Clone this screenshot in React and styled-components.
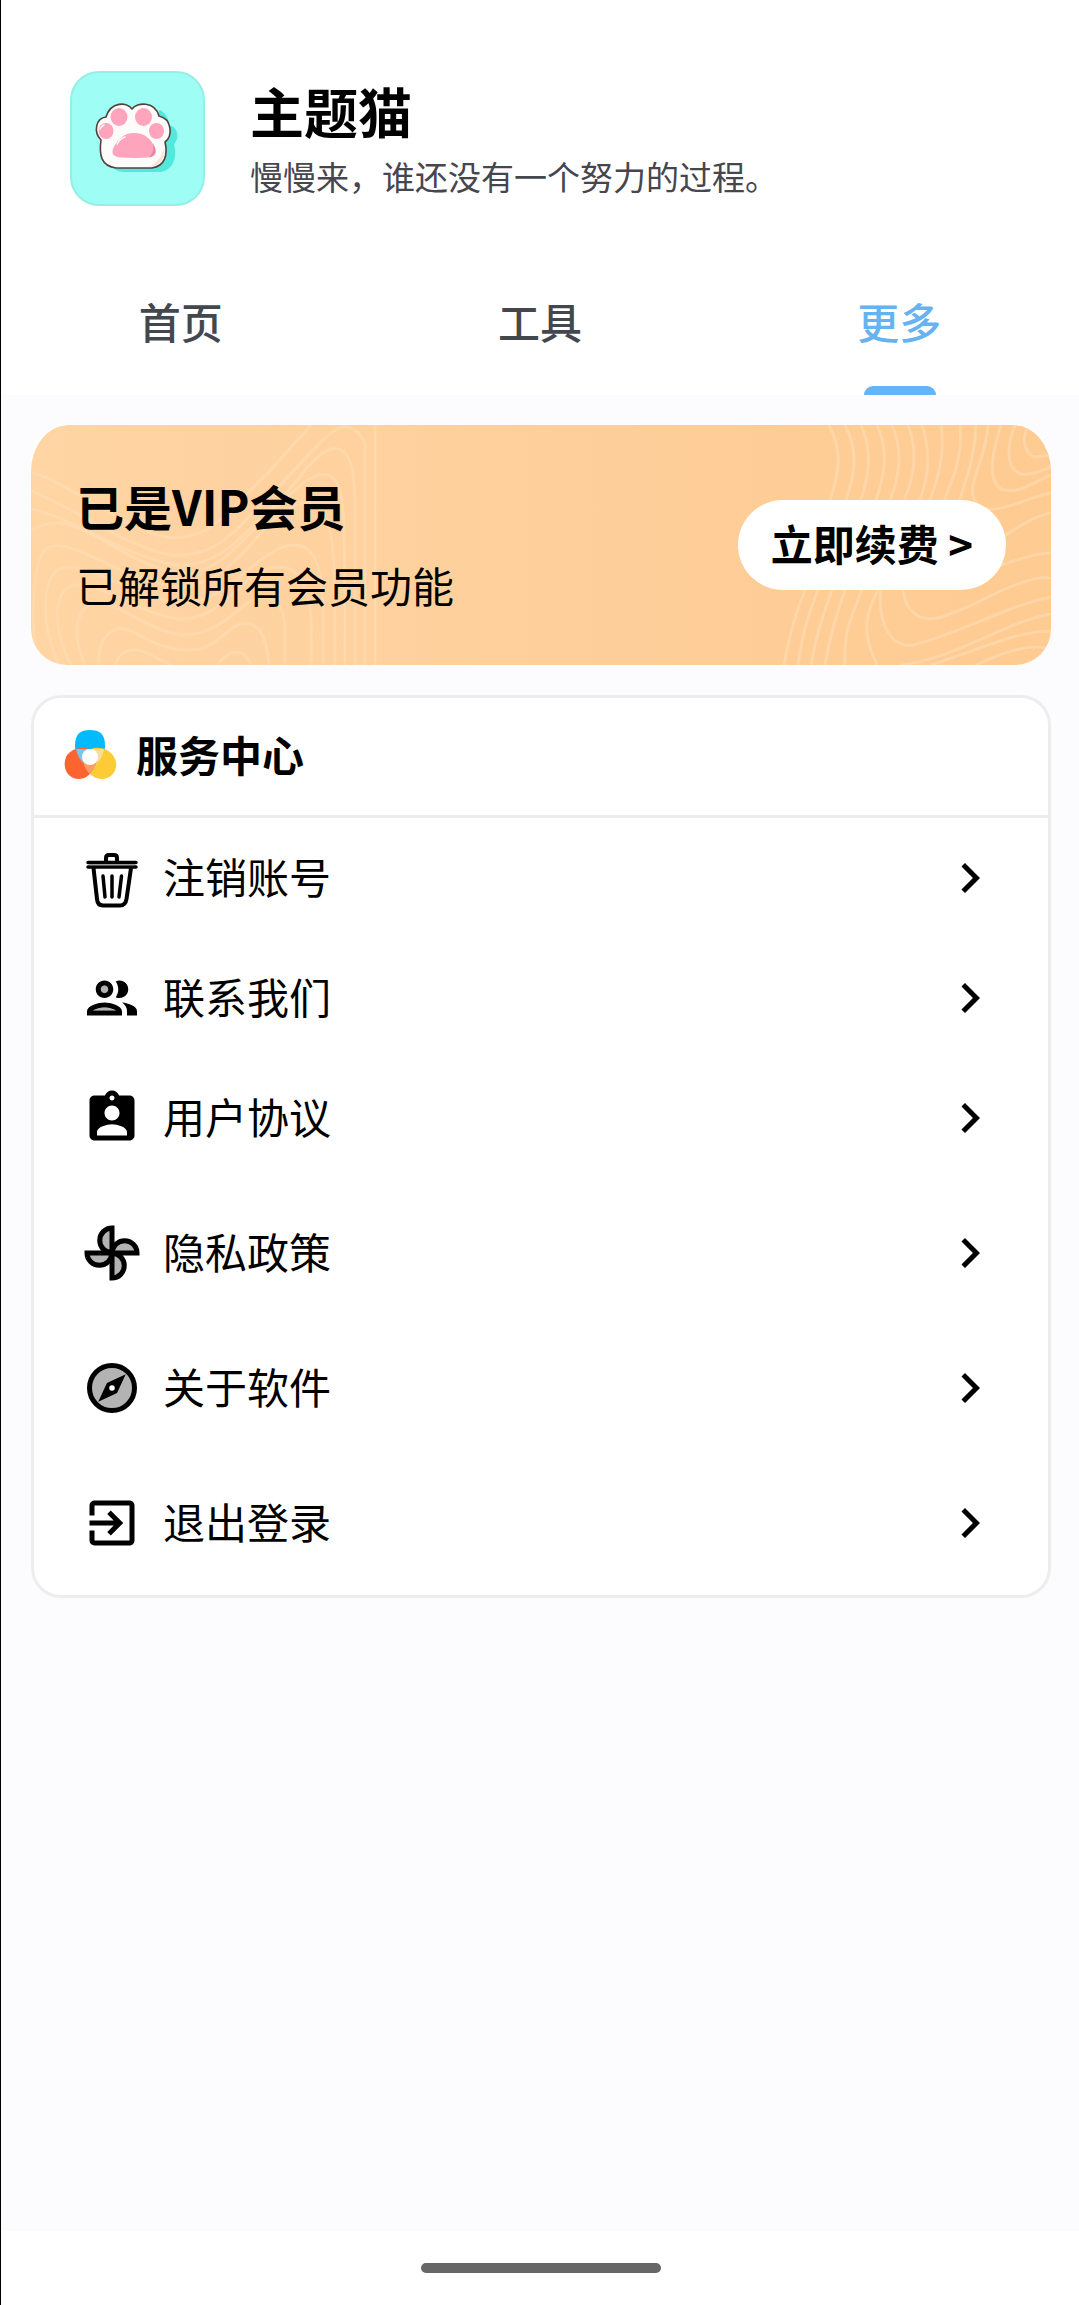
import React from "react";
import styled, { createGlobalStyle } from "styled-components";
import { MdAssignmentInd, MdChevronRight, MdExitToApp } from "react-icons/md";

const GlobalStyle = createGlobalStyle`
  *, *::before, *::after { box-sizing: border-box; }
  body {
    margin: 0;
    background: #ffffff;
    color: #000000;
    font-family: "Noto Sans CJK SC", "Noto Sans", sans-serif;
  }
  button {
    margin: 0;
    padding: 0;
    border: 0;
    background: none;
    color: inherit;
    font: inherit;
    text-align: left;
    cursor: pointer;
  }
  h1, h2, p, ul { margin: 0; padding: 0; }
  svg { display: block; flex: none; }
`;

const Page = styled.div`
  display: flex;
  flex-direction: column;
  min-height: 100vh;
  border-left: 1px solid #000000;
  background: #fcfcff;
`;

const Header = styled.header`
  background: #ffffff;
`;

const Profile = styled.div`
  display: flex;
  align-items: center;
  gap: 45px;
  padding: 71px 69px 45px;
`;

const ProfileText = styled.div`
  padding-bottom: 4px;
`;

const AppName = styled.h1`
  font-size: 54px;
  line-height: 78px;
  font-weight: 700;
`;

const Motto = styled.p`
  color: #46464f;
  font-size: 33px;
  line-height: 52px;
`;

const Tabs = styled.nav`
  display: flex;
`;

const Tab = styled.button`
  position: relative;
  flex: 1;
  height: 144px;
  padding-bottom: 6px;
  color: ${(p) => (p.$active ? "#66b3f0" : "#43474e")};
  font-size: 42px;
  font-weight: 500;
  text-align: center;

  &::after {
    content: "";
    display: ${(p) => (p.$active ? "block" : "none")};
    position: absolute;
    bottom: 0;
    left: calc(50% - 35px);
    width: 72px;
    height: 9px;
    border-radius: 9px 9px 0 0;
    background: #66b3f5;
  }
`;

const Main = styled.main`
  display: flex;
  flex: 1;
  flex-direction: column;
  gap: 30px;
  padding: 30px 28px 30px 30px;
`;

const Banner = styled.section`
  position: relative;
  display: flex;
  align-items: center;
  justify-content: space-between;
  height: 240px;
  padding: 0 45px;
  border-radius: 36px;
  background: #ffffff;
  overflow: hidden;
`;

const BannerArt = styled.svg`
  position: absolute;
  inset: 0;
  width: 100%;
  height: 100%;
`;

const BannerText = styled.div`
  position: relative;
  display: grid;
  gap: 2px;
`;

const BannerTitle = styled.h2`
  font-size: 48px;
  line-height: 78px;
  font-weight: 700;
`;

const BannerNote = styled.p`
  font-size: 42px;
  line-height: 78px;
`;

const RenewButton = styled.button`
  position: relative;
  height: 90px;
  padding: 0 33px 5px;
  border-radius: 45px;
  background: #ffffff;
  font-size: 42px;
  font-weight: 700;
`;

const Card = styled.section`
  border: 3px solid #ededee;
  border-radius: 30px;
  background: #ffffff;
`;

const CardHeader = styled.div`
  display: flex;
  align-items: center;
  gap: 16px;
  height: 120px;
  padding: 0 26px 2px;
  border-bottom: 3px solid #ededee;
`;

const CardTitle = styled.h2`
  padding-bottom: 4px;
  font-size: 42px;
  line-height: 60px;
  font-weight: 700;
`;

const Menu = styled.ul`
  padding-bottom: 12px;
  list-style: none;
`;

const MenuItem = styled.li`
  margin-top: ${(p) => (p.$spaced ? "15px" : "0")};
`;

const MenuButton = styled.button`
  display: flex;
  align-items: center;
  gap: 21px;
  width: 100%;
  height: 120px;
  padding: 0 48px;
`;

const MenuLabel = styled.span`
  flex: 1;
  padding-bottom: 4px;
  font-size: 42px;
  line-height: 60px;
`;

const SystemBar = styled.footer`
  display: flex;
  align-items: center;
  justify-content: center;
  height: 74px;
  padding-left: 2px;
  background: #ffffff;
`;

const HomeHandle = styled.div`
  width: 240px;
  height: 10px;
  border-radius: 5px;
  background: #676767;
`;

function PawLogo() {
  return (
    <svg width="135" height="135" viewBox="0 0 135 135" aria-hidden="true">
      <rect x="1" y="1" width="133" height="133" rx="28" fill="#9efdf4" stroke="#96efe5" strokeWidth="2" />
      <path
        d="M90 39C97 43 99 49 99 54C108 56 110 67 104 73C107 84 105 98 91 101H55C48 101 44 98 42 95Z"
        fill="#52e8db"
      />
      <path
        d="M62 38C57 31 41 30 36 46C26 47 23 61 31 69C29 84 31 95 46 97H82C95 95 98 84 95 71C103 65 102 48 89 45C85 30 67 31 62 38Z"
        fill="#fdfcfa"
        stroke="#54413f"
        strokeWidth="1.6"
        strokeLinejoin="round"
      />
      <path d="M94 77C95 88 90 94 80 96C87 91 92 86 94 77Z" fill="#f6e3d8" />
      <ellipse cx="49" cy="46" rx="8.5" ry="9" fill="#fea4bd" />
      <ellipse cx="73.5" cy="46" rx="8.5" ry="9" fill="#fea4bd" />
      <ellipse cx="36" cy="60" rx="7.5" ry="8" fill="#fea4bd" />
      <ellipse cx="86.5" cy="60" rx="7.5" ry="8" fill="#fea4bd" />
      <path
        d="M64 62C53 62 47 69 43 78C41 84 45 86 51 86.5C60 87 70 87 78 86.5C84 86 88 83 85 77C81 68 75 62 64 62Z"
        fill="#fea4bd"
      />
      <path d="M83 72C87 79 86 85 79 86.5C83 82 84 78 83 72Z" fill="#ea84a4" />
      <path d="M47 73C49 69 52 67 55 66M30 58C31 56 32 55 34 54" fill="none" stroke="#fff" strokeWidth="1.4" strokeLinecap="round" />
    </svg>
  );
}

function BannerPattern() {
  return (
    <BannerArt viewBox="0 0 1020 240" preserveAspectRatio="none" aria-hidden="true">
      <defs>
        <linearGradient id="gold" x1="0" x2="1" y1="0" y2="0">
          <stop offset="0" stopColor="#ffd5a4" />
          <stop offset="0.5" stopColor="#fecf9b" />
          <stop offset="1" stopColor="#fecb92" />
        </linearGradient>
        <clipPath id="plate">
          <path d="M38 0H982A38 46 0 0 1 1020 46V208A28 32 0 0 1 992 240H28A28 32 0 0 1 0 208V46A38 46 0 0 1 38 0Z" />
        </clipPath>
      </defs>
      <g clipPath="url(#plate)" fill="none" stroke="#ffdfba" strokeOpacity="0.5" strokeWidth="3">
        <rect width="1020" height="240" fill="url(#gold)" stroke="none" />
        <path d="M0 47C42 60 95 105 135 112C180 118 200 82 235 50L280 0" />
        <path d="M0 66C42 82 95 122 140 130C185 134 205 104 240 70C262 48 282 22 300 8C312 -2 328 0 334 20V240" />
        <path d="M0 84C40 92 95 132 145 140C190 142 210 110 240 84C265 62 280 30 300 24C318 20 322 40 324 70V240" />
        <path d="M0 106C22 90 45 100 75 117C105 135 135 150 160 148C195 144 225 98 250 78C272 56 292 40 305 56C314 70 314 100 314 240" />
        <path d="M6 240C0 200 0 130 18 122C45 112 95 160 150 162C200 158 222 110 248 90C268 74 285 74 294 92C304 110 304 150 304 240" />
        <path d="M28 240C10 200 10 155 28 144C52 132 105 174 150 178C190 178 215 142 240 128C262 114 282 118 288 146C294 170 292 200 292 240" />
        <path d="M40 240C22 205 22 172 38 162C62 150 105 190 150 194C190 194 205 156 236 144C258 138 270 146 276 170C282 190 280 210 280 240" />
        <path d="M54 240C42 212 44 188 58 180C82 170 110 204 150 210C190 210 205 182 224 174C242 168 252 180 254 200V240" />
        <path d="M68 240C66 212 82 196 104 208C125 220 145 228 168 224C190 220 198 198 216 198C232 200 236 220 238 240" />
        <path d="M84 240C90 222 105 222 120 230L140 240M186 240C196 228 206 222 216 232L220 240" />
        <path d="M344 0V240" />
        <path d="M790 0C804 26 804 48 792 75M774 164C766 180 756 200 744 240" transform="translate(0 0)" stroke="none" />
        <path d="M798 0C812 26 808 48 799 75M774 165C764 190 758 210 753 240" />
        <path d="M814 0C828 26 824 50 814 78M787 165C777 190 771 210 767 240" />
        <path d="M830 0C842 26 838 50 829 78M801 165C792 190 785 210 780 240" />
        <path d="M846 0C858 26 854 50 844 78M814 165C805 190 799 210 794 240" />
        <path d="M861 0C872 26 869 50 858 78M831 165C819 195 813 205 814 240" />
        <path d="M877 0C887 26 884 50 872 78M847 165C831 195 833 212 846 240" />
        <path d="M891 0C900 26 898 50 888 78M850 165C846 200 862 224 882 220C930 208 978 180 1020 172" />
        <path d="M910 0C914 30 908 50 898 78M872 165C875 190 892 196 906 193C945 184 985 150 1020 153" />
        <path d="M929 0C932 30 922 55 912 78" />
        <path d="M945 0C944 35 934 55 928 78" />
        <path d="M957 0C955 40 930 62 948 82C970 90 990 74 1020 68" />
        <path d="M970 0C962 26 955 55 970 64C988 70 1000 58 1020 50" />
        <path d="M984 0C976 20 974 44 990 49C1002 50 1010 46 1020 42" />
        <path d="M998 0C988 16 996 30 1004 32L1020 30" />
        <path d="M965 116C985 104 1000 92 1020 88M955 146C985 134 1005 128 1020 128" />
        <path d="M870 240C930 232 975 196 1020 189M900 240C945 226 985 206 1020 206M945 240C975 226 1000 218 1020 224" />
      </g>
    </BannerArt>
  );
}

function TrefoilIcon() {
  return (
    <svg width="60" height="60" viewBox="0 0 60 60" aria-hidden="true">
      <path d="M15 20C15 8 20 4 30 4S45 8 45 20C45 32 37 38 30 38S15 32 15 20Z" fill="#03bafe" />
      <path d="M29 23C22 20 10 23 6 31C2 41 7 53 19 53C31 53 37 38 37 31Z" fill="#fe6430" />
      <path d="M31 23C38 20 50 23 54 31C60 41 53 53 42 53C29 53 22 38 23 31Z" fill="#fdcb36" />
      <path d="M16 23H32L24 38C20 34 17 29 16 23Z" fill="#78c6e8" />
      <path d="M44 23H28L36 38C41 34 43 29 44 23Z" fill="#f8dd94" />
      <path d="M23 34H37C36 40 33 45 30 48C27 45 24 40 23 34Z" fill="#fc9c68" />
      <circle cx="30" cy="31" r="8" fill="#ffffff" />
    </svg>
  );
}

function TrashIcon() {
  return (
    <svg width="60" height="60" viewBox="0 0 60 60" fill="none" stroke="#000" strokeWidth="3.5" aria-hidden="true">
      <path d="M24 13V10Q24 7 27 7H32Q35 7 35 10V13" strokeWidth="4" />
      <path d="M6 14.5H54M6 19H54" strokeLinecap="round" />
      <path d="M11.5 20L15 51Q15.500 57.500 21 57.500H38Q43.500 57.500 44.500 51L49 20" strokeWidth="4" />
      <path d="M21 28L23 49M30 28V49M39.5 28L37 49" strokeLinecap="round" />
      <path d="M7 16.800H53" stroke="#888" strokeWidth="1" />
    </svg>
  );
}

function PeopleIcon() {
  return (
    <svg width="60" height="60" viewBox="0 0 24 24" aria-hidden="true">
      <circle cx="9" cy="8.5" r="1.5" opacity=".3" />
      <path d="M4.34 17h9.32c-.84-.58-2.87-1.25-4.66-1.25s-3.82.67-4.66 1.25z" opacity=".3" />
      <path d="M9 12c1.930 0 3.500-1.570 3.500-3.500S10.930 5 9 5 5.500 6.570 5.500 8.500 7.070 12 9 12zm0-5c.83 0 1.500.67 1.500 1.500S9.830 10 9 10s-1.500-.67-1.500-1.500S8.170 7 9 7zm0 6.750c-2.340 0-7 1.170-7 3.500V19h14v-1.750c0-2.330-4.660-3.500-7-3.500zM4.340 17c.84-.58 2.870-1.250 4.660-1.250s3.820.67 4.660 1.250H4.340zm11.700-3.190c1.160.84 1.960 1.960 1.960 3.440V19h4v-1.750c0-2.020-3.500-3.170-5.960-3.440zM15 12c1.930 0 3.500-1.570 3.500-3.500S16.930 5 15 5c-.54 0-1.040.13-1.500.35.63.89 1 1.980 1 3.150s-.37 2.260-1 3.150c.46.22.96.35 1.500.35z" />
    </svg>
  );
}

function PinwheelIcon() {
  return (
    <svg width="60" height="60" viewBox="0 0 24 24" aria-hidden="true">
      {[0, 90, 180, 270].map((angle) => (
        <path
          key={angle}
          d="M12 12H22A4.95 4.9 0 0 0 12.1 12"
          transform={`rotate(${angle} 12 12)`}
          fill="#b3b3b3"
          stroke="#000"
          strokeWidth="2"
        />
      ))}
    </svg>
  );
}

function CompassIcon() {
  return (
    <svg width="60" height="60" viewBox="0 0 24 24" aria-hidden="true">
      <circle cx="12" cy="12" r="9" fill="#b3b3b3" stroke="#000" strokeWidth="2" />
      <path d="M6.500 17.500L14.010 14.010L17.500 6.500L9.990 9.990Z" />
      <circle cx="12" cy="12" r="1.1" fill="#fff" />
    </svg>
  );
}

const tabs = ["首页", "工具", "更多"];

const menu = [
  { label: "注销账号", icon: <TrashIcon /> },
  { label: "联系我们", icon: <PeopleIcon /> },
  { label: "用户协议", icon: <MdAssignmentInd size={60} aria-hidden="true" /> },
  { label: "隐私政策", icon: <PinwheelIcon />, spaced: true },
  { label: "关于软件", icon: <CompassIcon />, spaced: true },
  { label: "退出登录", icon: <MdExitToApp size={60} aria-hidden="true" />, spaced: true },
];

export default function App() {
  return (
    <>
      <GlobalStyle />
      <Page>
        <Header>
          <Profile>
            <PawLogo />
            <ProfileText>
              <AppName>主题猫</AppName>
              <Motto>慢慢来，谁还没有一个努力的过程。</Motto>
            </ProfileText>
          </Profile>
          <Tabs>
            {tabs.map((name) => (
              <Tab key={name} type="button" $active={name === "更多"}>
                {name}
              </Tab>
            ))}
          </Tabs>
        </Header>
        <Main>
          <Banner>
            <BannerPattern />
            <BannerText>
              <BannerTitle>已是VIP会员</BannerTitle>
              <BannerNote>已解锁所有会员功能</BannerNote>
            </BannerText>
            <RenewButton type="button">立即续费 &gt;</RenewButton>
          </Banner>
          <Card>
            <CardHeader>
              <TrefoilIcon />
              <CardTitle>服务中心</CardTitle>
            </CardHeader>
            <Menu>
              {menu.map((item) => (
                <MenuItem key={item.label} $spaced={item.spaced}>
                  <MenuButton type="button">
                    {item.icon}
                    <MenuLabel>{item.label}</MenuLabel>
                    <MdChevronRight size={60} aria-hidden="true" />
                  </MenuButton>
                </MenuItem>
              ))}
            </Menu>
          </Card>
        </Main>
        <SystemBar>
          <HomeHandle />
        </SystemBar>
      </Page>
    </>
  );
}
